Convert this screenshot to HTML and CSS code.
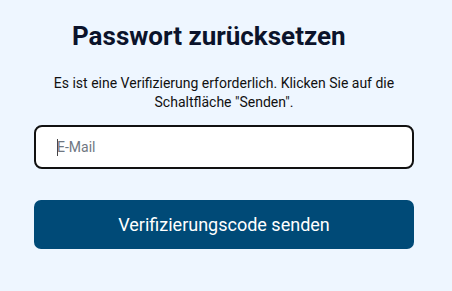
FILE: index.html
```html
<!DOCTYPE html>
<html lang="de">
<head>
<meta charset="utf-8">
<link rel="stylesheet" href="styles.css">
</head>
<body>
<main class="panel">
  <h1 class="title">Passwort zurücksetzen</h1>
  <p class="intro">Es ist eine Verifizierung erforderlich. Klicken Sie auf die Schaltfläche "Senden".</p>
  <div class="field"><span class="caret"></span><span class="placeholder">E-Mail</span></div>
  <button class="submit">Verifizierungscode senden</button>
</main>
</body>
</html>
```
FILE: styles.css
```css
html, body {
  margin: 0;
  padding: 0;
  background: #eef6ff;
  font-family: Roboto, "Liberation Sans", sans-serif;
}
.panel {
  width: 380px;
  margin: 0 0 0 34px;
  padding-top: 20px;
  display: flex;
  flex-direction: column;
}
.title {
  margin: 0 0 0 38px;
  font-size: 26px;
  font-weight: 700;
  color: #0b132b;
  line-height: 32px;
}
.intro {
  margin: 22px 0 0;
  font-size: 14px;
  line-height: 19px;
  color: #111;
  text-align: center;
}
.field {
  margin-top: 13px;
  height: 40px;
  border: 2px solid #111;
  border-radius: 8px;
  background: #fff;
  display: flex;
  align-items: center;
  padding-left: 21px;
}
.caret {
  width: 1px;
  height: 17px;
  background: #444;
  margin-right: -1px;
}
.placeholder {
  font-size: 14px;
  color: #6f7782;
}
.submit {
  margin-top: 31px;
  height: 49px;
  border: none;
  border-radius: 7px;
  background: #004a77;
  color: #fff;
  font-family: Roboto, "Liberation Sans", sans-serif;
  font-size: 18px;
}
```
